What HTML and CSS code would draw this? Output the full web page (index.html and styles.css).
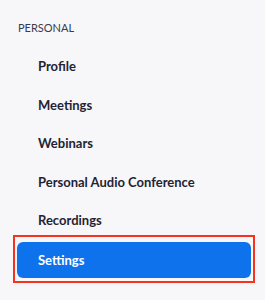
FILE: index.html
```html
<!DOCTYPE html>
<html lang="en">
<head>
<meta charset="utf-8">
<link rel="stylesheet" href="styles.css">
</head>
<body>
<nav class="sidebar">
  <div class="section-title">PERSONAL</div>
  <ul class="menu">
    <li class="menu-item">Profile</li>
    <li class="menu-item">Meetings</li>
    <li class="menu-item">Webinars</li>
    <li class="menu-item">Personal Audio Conference</li>
    <li class="menu-item">Recordings</li>
    <li class="menu-item active">Settings</li>
  </ul>
</nav>
</body>
</html>
```
FILE: styles.css
```css
html, body {
  margin: 0;
  padding: 0;
  background: #f7f7fa;
}
body {
  font-family: Lato, "Open Sans", sans-serif;
  color: #232333;
  width: 265px;
  height: 300px;
  overflow: hidden;
}
.sidebar {
  padding: 21px 14px 0 17px;
}
.section-title {
  margin-left: 1px;
  font-size: 11px;
  line-height: 13px;
  color: #3a3a4a;
  letter-spacing: 0;
}
.menu {
  list-style: none;
  margin: 14px 0 0 0;
  padding: 0;
  display: flex;
  flex-direction: column;
  gap: 2.5px;
}
.menu-item {
  height: 36px;
  display: flex;
  align-items: center;
  padding-left: 21px;
  font-size: 13px;
  font-weight: 700;
  border-radius: 6px;
}
.menu-item.active {
  position: relative;
  margin-top: 1.5px;
  background: #0e72ed;
  color: #ffffff;
}
.menu-item.active::after {
  content: "";
  position: absolute;
  top: -7px;
  bottom: -5px;
  left: -4px;
  right: -4px;
  border: 2px solid #f7321e;
  pointer-events: none;
}
```
